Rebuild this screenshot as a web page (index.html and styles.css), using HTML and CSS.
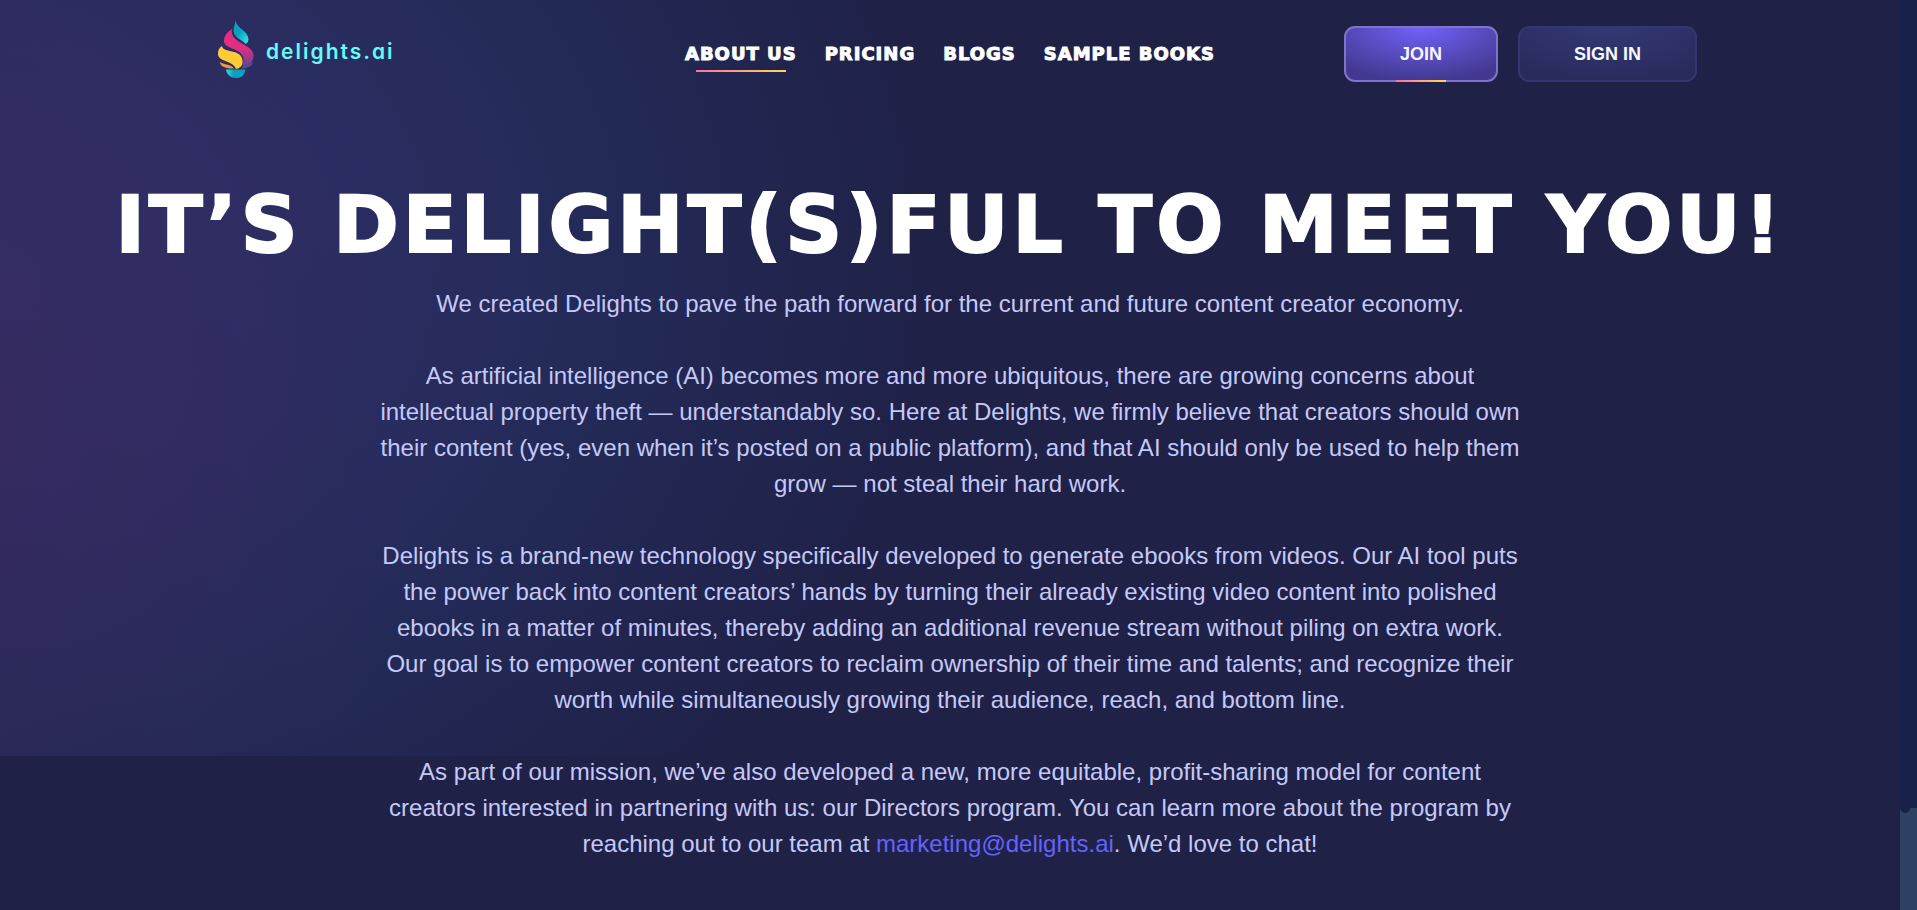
FILE: index.html
```html
<!DOCTYPE html>
<html lang="en">
<head>
<meta charset="utf-8">
<title>About us – delights.ai</title>
<link rel="stylesheet" href="styles.css">
</head>
<body>
<div class="page">
  <header class="header">
    <a class="logo" href="#" aria-label="delights.ai">
      <svg class="logo-mark" viewBox="0 0 36 58" aria-hidden="true">
        <defs>
          <linearGradient id="teal" x1="0" y1="0" x2="1" y2="1"><stop offset=".45" stop-color="#0d9fc0"/><stop offset="1" stop-color="#35f0e4"/></linearGradient>
          <linearGradient id="cup" x1="0" y1="0" x2="1" y2="0"><stop offset="0" stop-color="#2fe0e0"/><stop offset=".4" stop-color="#0d9fc0"/></linearGradient>
          <linearGradient id="pink" x1="0" y1="0" x2="0" y2="1"><stop offset=".5" stop-color="#e32d80"/><stop offset="1" stop-color="#5b4a92"/></linearGradient>
        </defs>
        <path fill="url(#teal)" d="M17.500 0C18 8 30 11 30.500 19c0 2-1 4-3 5C25 20 16 18 15.500 11 15.500 7 17.500 4 17.500 0z"/>
        <path fill="url(#pink)" d="M14 9C9 12 6 16 6 21c0 8 17 7 19.500 17 .5 3-.5 6-1.500 8.500C32 46 35.500 41 35.500 36 35.500 25 18 24 14.500 15c-.8-2-1-4-.5-6z"/>
        <path fill="#ffcb36" d="M4 26C1 28 0 30 0 34c0 8 15 6 18 15 8-1 8-10 4-14C17 30 5 32 4 26z"/>
        <path fill="#f39343" d="M2 42c0 4.500 6 7 14 6.500C13 44 7 45 2 42z"/>
        <path fill="#5b4a92" d="M35 42c-1 4.500-6 7-12 6.500C26 44 31 45 35 42z"/>
        <path fill="url(#cup)" d="M8 49.500h19.500c-1 6-4 8.500-9.500 8.500S9 55 8 49.500z"/>
      </svg>
      <span class="logo-text">delights.ai</span>
    </a>
    <nav class="nav">
      <a class="nav-link nav-link-active" href="#">ABOUT US</a>
      <a class="nav-link" href="#">PRICING</a>
      <a class="nav-link" href="#">BLOGS</a>
      <a class="nav-link" href="#">SAMPLE BOOKS</a>
    </nav>
    <div class="actions">
      <button class="btn btn-primary" type="button">JOIN</button>
      <button class="btn" type="button">SIGN IN</button>
    </div>
  </header>
  <main class="main">
    <h1 class="title">IT’S DELIGHT(S)FUL TO MEET YOU!</h1>
    <div class="copy">
      <p>We created Delights to pave the path forward for the current and future content creator economy.</p>
      <p>As artificial intelligence (AI) becomes more and more ubiquitous, there are growing concerns about intellectual property theft — understandably so. Here at Delights, we firmly believe that creators should own their content (yes, even when it’s posted on a public platform), and that AI should only be used to help them grow — not steal their hard work.</p>
      <p>Delights is a brand-new technology specifically developed to generate ebooks from videos. Our AI tool puts the power back into content creators’ hands by turning their already existing video content into polished ebooks in a matter of minutes, thereby adding an additional revenue stream without piling on extra work. Our goal is to empower content creators to reclaim ownership of their time and talents; and recognize their worth while simultaneously growing their audience, reach, and bottom line.</p>
      <p>As part of our mission, we’ve also developed a new, more equitable, profit-sharing model for content creators interested in partnering with us: our Directors program. You can learn more about the program by reaching out to our team at <a class="mail" href="mailto:marketing@delights.ai">marketing@delights.ai</a>. We’d love to chat!</p>
    </div>
  </main>
</div>
<div class="scrollbar" aria-hidden="true"><div class="thumb"></div></div>
</body>
</html>
```
FILE: styles.css
```css
* { box-sizing: border-box; }
body {
  margin: 0;
  display: flex;
  height: 100vh;
  overflow: hidden;
  background: #1f2147;
  color: #fff;
  font-family: "Liberation Sans", Arial, sans-serif;
}
.page {
  flex: 1;
  min-width: 0;
  background:
    radial-gradient(ellipse 480px 620px at -60px 440px, #45245c60, #45245c00) 0 0 / 100% 756px no-repeat,
    radial-gradient(ellipse 940px 760px at 0 260px, #2f3066 0, #2b2d62 35%, #242b59 60%, #1f2147 100%) 0 0 / 100% 756px no-repeat;
}
.header {
  display: grid;
  grid-template-columns: 1fr auto 1fr;
  align-items: center;
  max-width: 1494px;
  height: 108px;
  margin: 0 auto;
}
.logo {
  display: flex;
  align-items: center;
  gap: 12px;
  padding: 0 0 6px 15px;
  color: #63fbfb;
  text-decoration: none;
}
.logo-mark { width: 36px; height: 58px; margin-bottom: 4px; }
.logo-text {
  font: 600 21px Inter, sans-serif;
  font-feature-settings: "cv11";
  letter-spacing: 2px;
}
.nav { display: flex; gap: 28px; }
.nav-link {
  position: relative;
  color: #fff;
  font: 700 18px/24px "DejaVu Sans", sans-serif;
  letter-spacing: 1px;
  -webkit-text-stroke: 1px #fff;
  text-decoration: none;
}
.nav-link-active::after {
  content: "";
  position: absolute;
  left: 10%;
  right: 10%;
  bottom: -6px;
  height: 2px;
  background: linear-gradient(90deg, #ff6fa5, #ffd94f);
}
.actions { display: flex; justify-content: flex-end; gap: 20px; }
.btn {
  position: relative;
  height: 56px;
  padding: 0 54px;
  border: 2px solid #33366f;
  border-radius: 11px;
  background: radial-gradient(ellipse 75% 100% at 50% 0, #343975, #292b5c) border-box;
  color: #f7f7ff;
  font: 700 18px "Liberation Sans", Arial, sans-serif;
}
.btn-primary {
  border-color: #8073cc;
  background: radial-gradient(ellipse 75% 100% at 50% 0, #7263fb, #42388f) border-box;
}
.btn-primary::after {
  content: "";
  position: absolute;
  left: 50%;
  bottom: -2px;
  width: 50px;
  height: 2px;
  margin-left: -25px;
  background: linear-gradient(90deg, #ff6fa5, #ffd94f);
}
.main { padding-top: 67px; text-align: center; }
.title {
  margin: 0;
  font: 700 79px/100px "DejaVu Sans", sans-serif;
  letter-spacing: 4px;
  -webkit-text-stroke: 2px #fff;
  white-space: nowrap;
}
.copy {
  max-width: 1150px;
  margin: 11px auto 0;
  color: #c5c9f8;
  font-size: 24px;
  line-height: 36px;
}
.copy p { margin: 0 0 36px; }
.mail { color: #6563ff; text-decoration: none; }
.scrollbar {
  display: flex;
  flex-direction: column;
  justify-content: flex-end;
  width: 17px;
  background: #17214a;
}
.thumb { height: 102px; background: #2d4263; }
.thumb::before {
  content: "";
  display: block;
  width: 10px;
  height: 5px;
  border-radius: 0 0 5px 5px;
  background: #17214a;
}
```
